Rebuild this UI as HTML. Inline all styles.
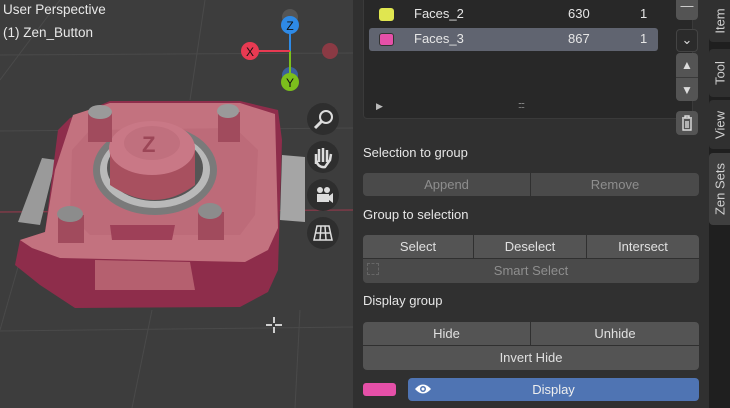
<!DOCTYPE html>
<html><head><style>
*{margin:0;padding:0;box-sizing:border-box}
body{width:730px;height:408px;overflow:hidden;background:#3d3d3d;font-family:"Liberation Sans",sans-serif;font-size:13px;color:#e6e6e6;position:relative}
.a{position:absolute}
.vt{color:#e8e8e8;font-size:13.5px}
.panel{left:353px;top:0;width:356px;height:408px;background:#303030}
.btn{position:absolute;background:#545454;color:#e0e0e0;text-align:center;line-height:23px;font-size:13px}
.dis{color:#8e8e8e;background:#4a4a4a}
.sb{position:absolute;left:676px;width:22px;background:#545454;border-radius:4px;color:#ddd;text-align:center}
.tab{position:absolute;left:709px;width:21px;background:#303030;border-radius:0 0 0 0}
.tab span{position:absolute;left:50%;top:50%;transform:translate(-50%,-50%) rotate(-90deg);white-space:nowrap;font-size:13px;color:#d0d0d0}
.nav{position:absolute;width:32px;height:32px;border-radius:50%;background:#333;left:307px}
</style></head><body>
<svg class="a" style="left:0;top:0" width="353" height="408">
<g stroke="#4a4a4a" stroke-width="1" fill="none">
<line x1="0" y1="55" x2="353" y2="53"/>
<line x1="0" y1="131" x2="353" y2="128"/>
<line x1="0" y1="331" x2="353" y2="327"/>
<line x1="152" y1="310" x2="132" y2="408"/>
<line x1="300" y1="310" x2="295" y2="408"/>
<line x1="20" y1="260" x2="0" y2="330"/>
<line x1="205" y1="0" x2="190" y2="100"/>
<line x1="60" y1="0" x2="0" y2="80"/>
</g>
<line x1="0" y1="212" x2="353" y2="210" stroke="#8a3a4a" stroke-width="1.2"/>
<!-- side tabs -->
<polygon points="42,158 56,160 40,225 18,222" fill="#9a9a9a"/>
<polygon points="282,155 305,157 305,222 280,220" fill="#a5a5a5"/>
<!-- body -->
<polygon points="70,118 110,101 240,101 278,110 282,140 278,270 268,292 240,307 75,308 40,285 15,265 20,240 45,232 58,130" fill="#8e2d4b"/>
<polygon points="73,115 110,103 240,103 275,114 278,228 268,250 245,262 60,258 32,248 20,240 45,232 55,170" fill="#c3727f"/>
<polygon points="95,260 190,262 195,290 95,290" fill="#b5606f"/>
<polygon points="90,130 235,128 258,150 255,215 240,235 90,235 70,215 72,150" fill="#bd6b79"/>
<polygon points="110,225 175,225 172,240 112,240" fill="#9e4058"/>
<!-- ring -->
<ellipse cx="155" cy="170" rx="62" ry="45" fill="#7a7a7a"/>
<ellipse cx="155" cy="170" rx="55" ry="38" fill="#b9b9b9"/>
<ellipse cx="155" cy="168" rx="48" ry="33" fill="#555"/>
<!-- dome -->
<path d="M110,150 L110,185 Q155,215 195,185 L195,150 Z" fill="#a8505f"/>
<ellipse cx="152" cy="148" rx="43" ry="27" fill="#c97886"/>
<ellipse cx="152" cy="143" rx="28" ry="17" fill="#c0707e"/>
<text x="142" y="152" font-family="Liberation Sans" font-size="22" fill="#9c4657" font-weight="bold">Z</text>
<!-- screws -->
<g>
<rect x="88" y="112" width="24" height="30" fill="#a14b5d"/><ellipse cx="100" cy="112" rx="12" ry="7" fill="#9a9a9a"/>
<rect x="218" y="112" width="22" height="30" fill="#a14b5d"/><ellipse cx="228" cy="111" rx="11" ry="7" fill="#9a9a9a"/>
<rect x="58" y="215" width="26" height="28" fill="#a14b5d"/><ellipse cx="70" cy="214" rx="13" ry="8" fill="#8c8c8c"/>
<rect x="198" y="212" width="26" height="28" fill="#a14b5d"/><ellipse cx="210" cy="211" rx="12" ry="8" fill="#8c8c8c"/>
</g>
<!-- crosshair -->
<g stroke="#fff" stroke-width="1.5"><line x1="266" y1="325" x2="272" y2="325"/><line x1="275" y1="325" x2="282" y2="325"/><line x1="274" y1="317" x2="274" y2="323"/><line x1="274" y1="327" x2="274" y2="333"/></g>
<!-- gizmo -->
<circle cx="290" cy="17" r="8" fill="#555"/>
<circle cx="290" cy="75" r="8" fill="#3d5f9a"/>
<circle cx="330" cy="51" r="8" fill="#8a3a44"/>
<line x1="290" y1="25" x2="290" y2="51" stroke="#2e8ae6" stroke-width="2"/>
<line x1="290" y1="51" x2="290" y2="82" stroke="#7cbf1c" stroke-width="2"/>
<line x1="250" y1="51" x2="290" y2="51" stroke="#e83a52" stroke-width="2"/>
<circle cx="290" cy="25" r="9" fill="#2e8ae6"/><text x="290" y="30" font-size="12" text-anchor="middle" fill="#111">Z</text>
<circle cx="250" cy="51" r="9" fill="#e83a52"/><text x="250" y="56" font-size="12" text-anchor="middle" fill="#111">X</text>
<circle cx="290" cy="82" r="9" fill="#7cbf1c"/><text x="290" y="87" font-size="12" text-anchor="middle" fill="#111">Y</text>
<!-- nav -->
<g fill="#2e2e2e"><circle cx="323" cy="119" r="16"/><circle cx="323" cy="157" r="16"/><circle cx="323" cy="195" r="16"/><circle cx="323" cy="233" r="16"/></g>
<g fill="#ddd" stroke="#ddd">
<circle cx="326" cy="117" r="6" fill="none" stroke-width="2"/><line x1="322" y1="121" x2="315" y2="128" stroke-width="3"/>
<path d="M316,164 L316,154 M319,162 L319,149 M323,162 L323,148 M327,162 L327,150 M316,160 Q318,168 325,167 L330,160 L331,154" stroke-width="2.5" fill="none"/>
<rect x="317" y="194" width="12" height="8" stroke="none"/><circle cx="320" cy="190" r="3" stroke="none"/><circle cx="327" cy="190" r="3" stroke="none"/><polygon points="329,196 333,193 333,203 329,200" stroke="none"/>
<path d="M317,226 L329,226 L332,240 L314,240 Z M316,233 L331,233 M321,226 L320,240 M325,226 L326,240" fill="none" stroke-width="1.5"/>
</g>
</svg>
<div class="a vt" style="left:3px;top:2px">User Perspective</div>
<div class="a vt" style="left:3px;top:25px">(1) Zen_Button</div>

<div class="a panel"></div>
<div class="a" style="left:363px;top:-4px;width:330px;height:123px;background:#282828;border:1px solid #3a3a3a;border-radius:4px"></div>
<div class="a" style="left:379px;top:8px;width:15px;height:13px;border-radius:3px;background:#e0e650"></div>
<div class="a" style="left:414px;top:6px">Faces_2</div>
<div class="a" style="left:568px;top:6px">630</div>
<div class="a" style="left:640px;top:6px">1</div>
<div class="a" style="left:369px;top:28px;width:289px;height:23px;background:#606470;border-radius:3px"></div>
<div class="a" style="left:379px;top:33px;width:15px;height:13px;border-radius:3px;background:#e550a8;border:1px solid #333"></div>
<div class="a" style="left:414px;top:31px">Faces_3</div>
<div class="a" style="left:568px;top:31px">867</div>
<div class="a" style="left:640px;top:31px">1</div>
<div class="a" style="left:376px;top:101px;font-size:9px;color:#bbb">▶</div>
<div class="a" style="left:518px;top:100px;font-size:9px;color:#aaa;letter-spacing:-1px">::::</div>

<div class="sb" style="top:-4px;height:24px;line-height:20px">—</div>
<div class="sb" style="top:29px;height:23px;line-height:20px;background:#2b2b2b;border:1px solid #444">⌄</div>
<div class="sb" style="top:53px;height:48px;"></div>
<div class="a" style="left:676px;top:53px;width:22px;text-align:center;font-size:12px;color:#ddd;line-height:24px">▲</div>
<div class="a" style="left:676px;top:77px;width:22px;text-align:center;font-size:12px;color:#ddd;line-height:24px;border-top:1px solid #3a3a3a">▼</div>
<div class="sb" style="top:111px;height:24px"></div>
<svg class="a" style="left:680px;top:114px" width="14" height="18"><path d="M2,4 H12 M5,4 V2 H9 V4 M3,5 V16 H11 V5 M6,7 V14 M8,7 V14" stroke="#ddd" stroke-width="1.4" fill="none"/></svg>

<div class="a" style="left:363px;top:145px">Selection to group</div>
<div class="btn dis" style="left:363px;top:173px;width:167px;height:23px;border-radius:4px 0 0 4px">Append</div>
<div class="btn dis" style="left:531px;top:173px;width:168px;height:23px;border-radius:0 4px 4px 0">Remove</div>
<div class="a" style="left:363px;top:207px">Group to selection</div>
<div class="btn" style="left:363px;top:235px;width:110px;height:23px;border-radius:4px 0 0 0">Select</div>
<div class="btn" style="left:474px;top:235px;width:112px;height:23px">Deselect</div>
<div class="btn" style="left:587px;top:235px;width:112px;height:23px;border-radius:0 4px 0 0">Intersect</div>
<div class="btn dis" style="left:363px;top:259px;width:336px;height:24px;border-radius:0 0 4px 4px;background:#4a4a4a">Smart Select</div>
<div class="a" style="left:367px;top:263px;width:12px;height:12px;border:1px dashed #666"></div>
<div class="a" style="left:363px;top:293px">Display group</div>
<div class="btn" style="left:363px;top:322px;width:167px;height:23px;border-radius:4px 0 0 0">Hide</div>
<div class="btn" style="left:531px;top:322px;width:168px;height:23px;border-radius:0 4px 0 0">Unhide</div>
<div class="btn" style="left:363px;top:346px;width:336px;height:24px;border-radius:0 0 4px 4px">Invert Hide</div>
<div class="a" style="left:363px;top:383px;width:33px;height:13px;border-radius:3px;background:#e550a8"></div>
<div class="btn" style="left:408px;top:378px;width:291px;height:23px;border-radius:4px;background:#4f74b3;color:#eee">Display</div>
<svg class="a" style="left:414px;top:383px" width="18" height="12"><path d="M1,6 Q9,-3 17,6 Q9,15 1,6 Z" fill="#fff"/><circle cx="9" cy="6" r="3" fill="#4f74b3"/><circle cx="9" cy="6" r="1.5" fill="#fff"/></svg>

<div class="a" style="left:709px;top:0;width:21px;height:408px;background:#1f1f1f"></div>
<div class="tab" style="top:0;height:42px;border-radius:0 0 0 4px"><span>Item</span></div>
<div class="tab" style="top:49px;height:48px;border-radius:4px 0 0 4px"><span>Tool</span></div>
<div class="tab" style="top:100px;height:49px;border-radius:4px 0 0 4px"><span>View</span></div>
<div class="tab" style="top:153px;height:72px;background:#3f3f3f;border-radius:4px 0 0 4px"><span>Zen Sets</span></div>
</body></html>
